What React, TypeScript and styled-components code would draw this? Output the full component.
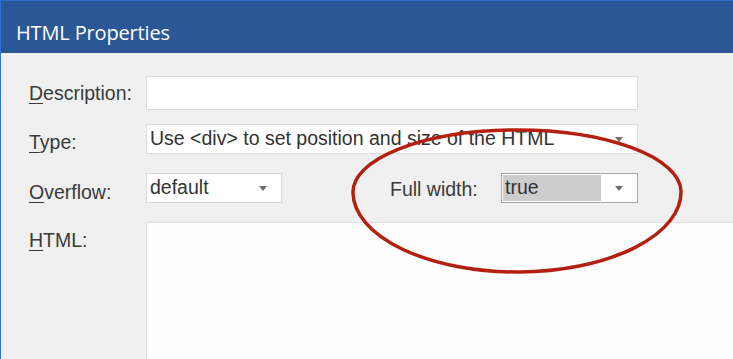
import styled, { createGlobalStyle } from 'styled-components';

const GlobalStyle = createGlobalStyle`
  html, body {
    margin: 0;
    padding: 0;
    background: #f0f0f0;
    overflow: hidden;
  }
  body {
    font-family: "Liberation Sans", Arial, sans-serif;
  }
`;

const StyledWindow = styled.div`
  position: relative;
  display: flex;
  flex-direction: column;
  height: 100vh;
  background: #f0f0f0;
  border-left: 1px solid #2f72d2;
  box-sizing: border-box;
`;

const StyledTitleBar = styled.header`
  flex: none;
  height: 53px;
  box-sizing: border-box;
  padding: 19px 0 0 15px;
  background: #2b5797;
  border-top: 1px solid #2f6fd0;
`;

const StyledTitle = styled.h1`
  margin: 0;
  font-family: "Open Sans", "Noto Sans", sans-serif;
  font-size: 20px;
  font-weight: 400;
  line-height: 26px;
  color: #ffffff;
  letter-spacing: -0.15px;
`;

const StyledForm = styled.div`
  display: flex;
  flex: 1;
  flex-direction: column;
  padding: 23px 0 0 28px;
  min-height: 0;
`;

const StyledRow = styled.div<{ $gap: number; $fill?: boolean }>`
  display: flex;
  align-items: flex-start;
  margin-top: ${({ $gap }) => $gap}px;
  flex: ${({ $fill }) => ($fill ? 1 : 'none')};
  min-height: 0;
`;

const StyledLabel = styled.label<{ $offset: number; $width?: number; $indent?: number }>`
  flex: none;
  width: ${({ $width }) => $width ?? 117}px;
  margin-left: ${({ $indent }) => $indent ?? 0}px;
  padding-top: ${({ $offset }) => $offset}px;
  font-size: 19.5px;
  line-height: 22px;
  color: #3a3a3a;
  white-space: nowrap;

  u {
    text-decoration-thickness: 1px;
    text-underline-offset: 3px;
  }
`;

const StyledTextInput = styled.div`
  width: 492px;
  height: 34px;
  box-sizing: border-box;
  background: #ffffff;
  border: 1px solid #dbdbdb;
`;

const StyledSelect = styled.div<{ $width: number; $focused?: boolean }>`
  display: flex;
  align-items: stretch;
  width: ${({ $width }) => $width}px;
  height: 30px;
  box-sizing: border-box;
  padding: 1px;
  background: #ffffff;
  border: 1px solid ${({ $focused }) => ($focused ? '#a9a9a9' : '#dbdbdb')};
`;

const StyledValue = styled.span<{ $selected?: boolean }>`
  display: flex;
  align-items: center;
  width: ${({ $selected }) => ($selected ? '98px' : 'auto')};
  padding-left: 2px;
  padding-bottom: 2px;
  box-sizing: border-box;
  background: ${({ $selected }) => ($selected ? '#cdcdcd' : 'transparent')};
  font-size: 19.5px;
  color: #333333;
  white-space: nowrap;
`;

const StyledArrow = styled.span`
  align-self: center;
  flex: none;
  margin-left: auto;
  margin-right: 13px;
  width: 0;
  height: 0;
  border-left: 4.5px solid transparent;
  border-right: 4.5px solid transparent;
  border-top: 5px solid #6e6e6e;
`;

const StyledTextArea = styled.div`
  flex: 1;
  align-self: stretch;
  background: #fdfdfd;
  border-top: 1px solid #e1e1e1;
  border-left: 1px solid #e1e1e1;
`;

const StyledMark = styled.svg`
  position: absolute;
  top: 0;
  left: 0;
  width: 100%;
  height: 100%;
  pointer-events: none;
`;

export default function App() {
  return (
    <StyledWindow>
      <GlobalStyle />
      <StyledTitleBar>
        <StyledTitle>HTML Properties</StyledTitle>
      </StyledTitleBar>
      <StyledForm>
        <StyledRow $gap={0}>
          <StyledLabel $offset={6}>
            <u>D</u>escription:
          </StyledLabel>
          <StyledTextInput />
        </StyledRow>
        <StyledRow $gap={14}>
          <StyledLabel $offset={7}>
            <u>T</u>ype:
          </StyledLabel>
          <StyledSelect $width={492}>
            <StyledValue>Use &lt;div&gt; to set position and size of the HTML</StyledValue>
            <StyledArrow />
          </StyledSelect>
        </StyledRow>
        <StyledRow $gap={19}>
          <StyledLabel $offset={8}>
            <u>O</u>verflow:
          </StyledLabel>
          <StyledSelect $width={136}>
            <StyledValue>default</StyledValue>
            <StyledArrow />
          </StyledSelect>
          <StyledLabel $offset={5} $width={111} $indent={108}>
            Full width:
          </StyledLabel>
          <StyledSelect $width={137} $focused>
            <StyledValue $selected>true</StyledValue>
            <StyledArrow />
          </StyledSelect>
        </StyledRow>
        <StyledRow $gap={19} $fill>
          <StyledLabel $offset={7}>
            <u>H</u>TML:
          </StyledLabel>
          <StyledTextArea />
        </StyledRow>
      </StyledForm>
      <StyledMark viewBox="0 0 732 359" preserveAspectRatio="none">
        <path
          d="M 352 193 A 164 62 0 0 1 680 191 A 164 80 0 0 1 352 193 Z"
          fill="none"
          stroke="#b3200f"
          strokeWidth="3.5"
        />
      </StyledMark>
    </StyledWindow>
  );
}
